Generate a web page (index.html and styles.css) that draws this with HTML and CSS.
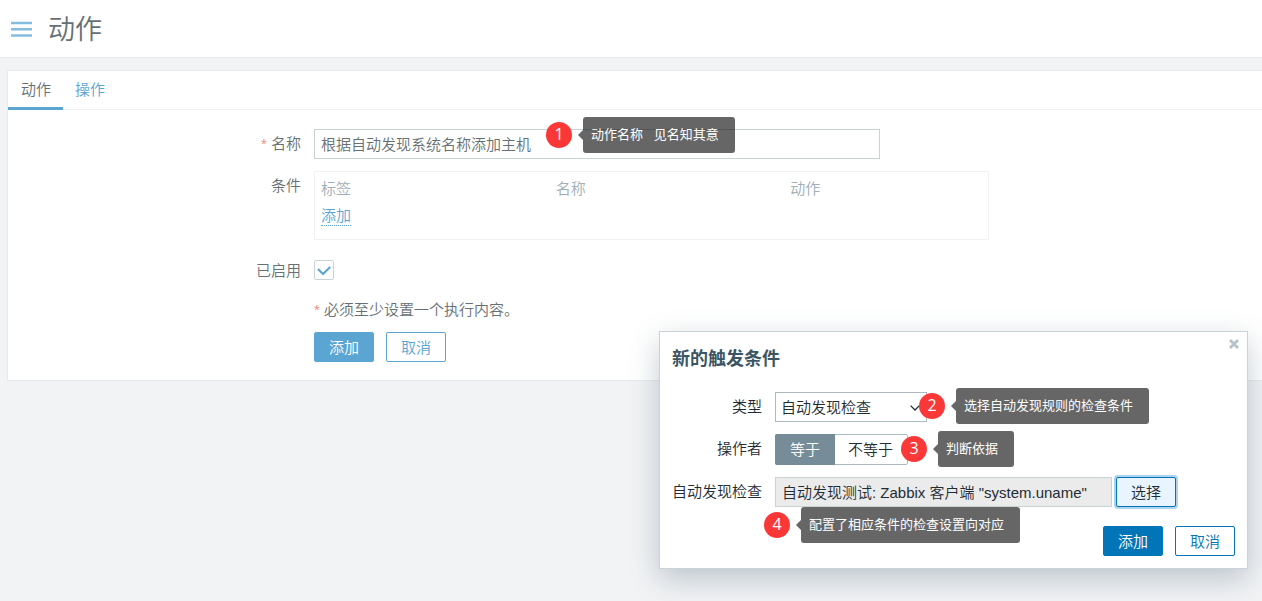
FILE: index.html
```html
<!DOCTYPE html>
<html lang="zh-CN">
<head>
<meta charset="utf-8">
<title>动作</title>
<link rel="stylesheet" href="styles.css">
</head>
<body>
<header class="header">
  <button class="menu-button" type="button" aria-label="菜单">
    <svg width="21" height="18" viewBox="0 0 21 18" aria-hidden="true"><path d="M0 .8h21v2.400H0zM0 7h21v2.400H0zM0 13.300h21v2.400H0z" fill="currentColor"/></svg>
  </button>
  <h1 class="page-title">动作</h1>
</header>

<main class="panel">
  <nav class="tabs">
    <a class="tab tab-active" href="#action">动作</a>
    <a class="tab" href="#operations">操作</a>
  </nav>
  <form class="form" id="action">
    <label class="label" for="name"><span class="required">*</span> 名称</label>
    <div class="field">
      <input class="text-input name-input" id="name" type="text" value="根据自动发现系统名称添加主机">
      <div class="note note-name"><span class="note-number">1</span><span class="note-text">动作名称   见名知其意</span></div>
    </div>

    <span class="label">条件</span>
    <div class="conditions">
      <table class="conditions-table">
        <thead><tr><th>标签</th><th>名称</th><th>动作</th></tr></thead>
        <tbody><tr><td colspan="3"><a class="add-link" href="#add-condition">添加</a></td></tr></tbody>
      </table>
    </div>

    <label class="label label-enabled" for="enabled">已启用</label>
    <div class="check">
      <input class="check-input" id="enabled" type="checkbox" checked>
      <svg class="check-mark" width="20" height="20" viewBox="0 0 20 20" aria-hidden="true"><path d="M4 9L9 14L16.200 7" fill="none" stroke="currentColor" stroke-width="2.2"/></svg>
    </div>

    <p class="hint"><span class="required">*</span> 必须至少设置一个执行内容。</p>
    <div class="actions">
      <button class="button button-filled" type="button">添加</button>
      <button class="button" type="button">取消</button>
    </div>
  </form>
</main>

<section class="dialog" role="dialog" aria-labelledby="dialog-title">
  <button class="close-button" type="button" aria-label="关闭">
    <svg width="12" height="12" viewBox="0 0 12 12" aria-hidden="true"><path d="M2 2l8 8M10 2l-8 8" stroke="currentColor" stroke-width="3"/></svg>
  </button>
  <h2 class="dialog-title" id="dialog-title">新的触发条件</h2>
  <form class="dialog-form">
    <label class="label" for="type">类型</label>
    <div class="field">
      <div class="select-box">
        <select class="select" id="type"><option>自动发现检查</option></select>
        <svg class="select-arrow" width="10" height="6" viewBox="0 0 10 6" aria-hidden="true"><path d="M.6 .6L5 5L9.400 .6" fill="none" stroke="currentColor" stroke-width="1.3"/></svg>
      </div>
      <div class="note note-type"><span class="note-number">2</span><span class="note-text">选择自动发现规则的检查条件</span></div>
    </div>

    <span class="label" id="operator-label">操作者</span>
    <div class="field">
      <div class="segments" role="radiogroup" aria-labelledby="operator-label">
        <label class="segment"><input class="segment-input" type="radio" name="operator" checked><span class="segment-text">等于</span></label>
        <label class="segment"><input class="segment-input" type="radio" name="operator"><span class="segment-text">不等于</span></label>
      </div>
      <div class="note note-operator"><span class="note-number">3</span><span class="note-text">判断依据</span></div>
    </div>

    <label class="label" for="check">自动发现检查</label>
    <div class="field picker">
      <input class="text-input picker-input" id="check" type="text" readonly value="自动发现测试: Zabbix 客户端 &quot;system.uname&quot;">
      <button class="button button-focused" type="button">选择</button>
      <div class="note note-check"><span class="note-number">4</span><span class="note-text">配置了相应条件的检查设置向对应</span></div>
    </div>
  </form>
  <div class="dialog-actions">
    <button class="button button-filled" type="button">添加</button>
    <button class="button" type="button">取消</button>
  </div>
</section>
</body>
</html>
```
FILE: styles.css
```css
* {
  box-sizing: border-box;
}

body {
  --accent: #5ba5d3;
  min-height: 100vh;
  margin: 0;
  overflow: hidden;
  background: #f2f3f5;
  color: #667074;
  font: 350 15px/20px "Liberation Sans", "Noto Sans CJK SC", sans-serif;
}

button,
input,
select {
  margin: 0;
  font: inherit;
  color: inherit;
}

a {
  color: var(--accent);
  text-decoration: none;
}

.header {
  display: flex;
  align-items: center;
  gap: 16px;
  height: 58px;
  padding: 2px 11px 0;
  background: #fff;
  border-bottom: 1px solid #e6e9eb;
}

.menu-button {
  display: flex;
  padding: 0;
  border: 0;
  background: none;
  color: #84bddf;
}

.page-title {
  margin: 0;
  font-size: 27px;
  line-height: 36px;
  font-weight: 350;
}

.panel {
  margin: 12px 0 0 7px;
  background: #fff;
  border: 1px solid #e6eaec;
  border-right: 0;
}

.tabs {
  display: flex;
  height: 39px;
  border-bottom: 1px solid #f0f1f2;
}

.tab {
  height: 39px;
  padding: 9px 12px;
}

.tab-active {
  padding-left: 13px;
  color: inherit;
  border-bottom: 3px solid var(--accent);
}

.form,
.dialog-form {
  display: grid;
  column-gap: 13px;
  row-gap: 12px;
}

.form {
  grid-template-columns: 293px 1fr;
  padding: 19px 0 18px;
}

.label {
  padding-top: 5px;
  text-align: right;
}

.required {
  color: #ec8f86;
}

.field {
  position: relative;
}

.text-input {
  display: block;
  height: 30px;
  padding: 0 6px 2px;
  border: 1px solid #c8d3d6;
  background: #fff;
}

.name-input {
  width: 566px;
}

.conditions {
  width: 675px;
  height: 69px;
  padding: 3px 6px;
  border: 1px solid #f1f3f3;
}

.conditions + .label {
  margin-top: 8px;
}

.conditions-table {
  width: 704px;
  table-layout: fixed;
  border-collapse: collapse;
}

.conditions-table th,
.conditions-table td {
  height: 27px;
  padding: 0;
  font-weight: 350;
  text-align: left;
}

.conditions-table th {
  color: #a0aeb6;
}

.add-link {
  padding-bottom: 1px;
  border-bottom: 1px dotted var(--accent);
}

.check {
  position: relative;
  width: 20px;
  height: 20px;
  margin-top: 8px;
}

.check-input {
  display: block;
  width: 20px;
  height: 20px;
  appearance: none;
  border: 1px solid #c8d3d6;
  border-radius: 2px;
  background: #fff;
}

.check-mark {
  position: absolute;
  inset: 0;
  color: var(--accent);
  pointer-events: none;
}

.label-enabled {
  padding-top: 1px;
}

.hint,
.actions {
  grid-column: 2;
  margin: 0;
}

.hint {
  padding-top: 7px;
}

.actions,
.dialog-actions {
  display: flex;
  gap: 12px;
}

.button {
  min-width: 60px;
  height: 30px;
  padding: 1px 10px 0;
  border: 1px solid var(--accent);
  border-radius: 2px;
  background: #fff;
  color: var(--accent);
}

.button-filled {
  background: var(--accent);
  color: #fff;
}

.dialog {
  --accent: #0275b8;
  position: absolute;
  top: 331px;
  right: 14px;
  width: 589px;
  padding: 15px 12px 12px;
  background: #fff;
  border: 1px solid #c9d3da;
  box-shadow: 0 10px 28px rgba(75, 100, 115, 0.32);
  color: #1f2c33;
}

.close-button {
  position: absolute;
  top: 6px;
  right: 7px;
  display: flex;
  padding: 0;
  border: 0;
  background: none;
  color: #b7c4cb;
}

.dialog-title {
  margin: 0 0 21px;
  font-size: 18px;
  line-height: 24px;
  font-weight: 700;
  color: #3c5563;
}

.dialog-form {
  grid-template-columns: 90px 1fr;
}

.select-box {
  position: relative;
  width: 152px;
}

.select {
  display: block;
  width: 100%;
  height: 30px;
  padding: 1px 20px 0 5px;
  appearance: none;
  border: 1px solid #acbbc2;
  border-radius: 0;
  background: #fff;
}

.select-arrow {
  position: absolute;
  top: 13px;
  right: 7px;
  pointer-events: none;
}

.segments {
  display: flex;
  width: 133px;
  height: 31px;
  border: 1px solid #acbbc2;
  border-radius: 2px;
}

.segment {
  position: relative;
  display: flex;
}

.segment-input {
  position: absolute;
  inset: 0;
  margin: 0;
  opacity: 0;
}

.segment-text {
  padding: 5px 13px 4px;
  white-space: nowrap;
}

.segment-input:checked + .segment-text {
  margin: -1px 0 -1px -1px;
  padding: 6px 15px 5px;
  border-radius: 2px 0 0 2px;
  background: #768d99;
  color: #fff;
}

.picker {
  display: flex;
  gap: 4px;
}

.picker-input {
  width: 337px;
  background: #ebebeb;
}

.button-focused {
  background: #e8f4ff;
  color: inherit;
  box-shadow: 0 0 0 2px #acd3f2;
}

.dialog-actions {
  justify-content: flex-end;
  margin-top: 19px;
}

.note {
  position: absolute;
  z-index: 1;
  display: flex;
  align-items: center;
  gap: 11px;
  color: #fff;
  font-weight: 400;
  white-space: pre;
}

.note-number {
  width: 26px;
  height: 26px;
  border-radius: 50%;
  background: #fb3838;
  font: 16px/24px "Open Sans", sans-serif;
  text-align: center;
}

.note-text {
  position: relative;
  height: 36px;
  padding: 0 16px 0 8px;
  border-radius: 3px;
  background: rgba(0, 0, 0, 0.6);
  font-size: 13px;
  line-height: 35px;
}

.note-text::before {
  content: "";
  position: absolute;
  top: 13px;
  right: 100%;
  border: solid transparent;
  border-width: 5px 5px 5px 0;
  border-right-color: rgba(0, 0, 0, 0.6);
}

.note-name {
  top: -12px;
  left: 232px;
}

.note-type {
  top: -4px;
  left: 144px;
}

.note-operator {
  top: -3px;
  left: 126px;
}

.note-check {
  top: 30px;
  left: -11px;
}
```
